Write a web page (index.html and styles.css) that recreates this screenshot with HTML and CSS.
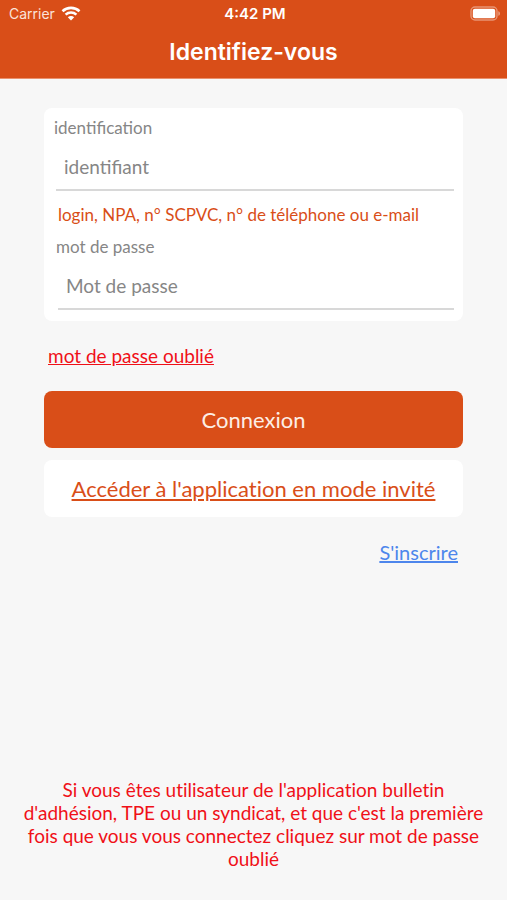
FILE: index.html
```html
<!DOCTYPE html>
<html lang="fr">
<head>
    <meta charset="UTF-8">
    <meta name="viewport" content="width=device-width, initial-scale=1.0">
    <title>Identifiez-vous</title>
    <link rel="stylesheet" href="styles.css">
</head>
<body>
    <header class="header">
        <div class="status-bar">
            <div class="carrier">
                <span>Carrier</span>
                <svg class="wifi" width="20" height="15" viewBox="0 0 20 15" fill="none" stroke="#fff" stroke-width="2.6">
                    <path d="M1.5 5.2C6.2 0.8 13.8 0.8 18.5 5.2"/>
                    <path d="M4.6 8.6C7.7 5.8 12.3 5.8 15.4 8.6"/>
                    <path d="M10 14.4L6.8 11.2C8.6 9.6 11.4 9.6 13.2 11.2Z" fill="#fff" stroke="none"/>
                </svg>
            </div>
            <div class="time">4:42 PM</div>
            <div class="battery">
                <svg width="31" height="15" viewBox="0 0 31 15">
                    <rect x="1" y="1" width="26" height="13" rx="4" fill="none" stroke="#fff" stroke-opacity="0.4" stroke-width="1.4"/>
                    <rect x="2.8" y="2.8" width="22.4" height="9.4" rx="2" fill="#fff"/>
                    <path d="M28.4 5.2C30.4 5.8 30.4 9.2 28.4 9.8Z" fill="#fff" fill-opacity="0.5"/>
                </svg>
            </div>
        </div>
        <h1>Identifiez-vous</h1>
    </header>

    <main class="container">
        <form id="login-form">
            <div class="card">
                <label for="identifiant">identification</label>
                <input type="text" id="identifiant" placeholder="identifiant">
                <p class="hint">login, NPA, n° SCPVC, n° de téléphone ou e-mail</p>
                <div class="password">
                    <label for="mot_de_passe">mot de passe</label>
                    <input type="password" id="mot_de_passe" placeholder="Mot de passe">
                </div>
            </div>
            <a class="forgot" href="#">mot de passe oublié</a>
            <button type="submit" class="btn">Connexion</button>
            <a class="guest" href="#">Accéder à l'application en mode invité</a>
            <a class="register" href="#">S'inscrire</a>
        </form>
    </main>

    <footer class="notice">
        <p>Si vous êtes utilisateur de l'application bulletin d'adhésion, TPE ou un syndicat, et que c'est la première fois que vous vous connectez cliquez sur mot de passe oublié</p>
    </footer>
</body>
</html>
```
FILE: styles.css
```css
* {
    box-sizing: border-box;
}

body {
    font-family: Lato, sans-serif;
    background-color: #f7f7f7;
    margin: 0;
    min-height: 100vh;
    display: flex;
    flex-direction: column;
}

.header {
    background-color: #d94e18;
    color: #fff;
    font-family: Inter, sans-serif;
    border-bottom: 1px solid #e9916e;
}

.status-bar {
    display: grid;
    grid-template-columns: 1fr auto 1fr;
    align-items: center;
    height: 27px;
    padding: 0 6px 0 9px;
    font-size: 14px;
}

.carrier {
    display: flex;
    align-items: center;
    gap: 6px;
    color: #fbe3da;
}

.time {
    font-size: 15px;
    font-weight: 600;
}

.battery {
    display: flex;
    justify-content: flex-end;
}

h1 {
    margin: 0;
    font-size: 23px;
    font-weight: 600;
    line-height: 51px;
    text-align: center;
}

.container {
    flex: 1;
    padding: 29px 44px;
}

form {
    display: flex;
    flex-direction: column;
}

.card {
    background-color: #fff;
    border-radius: 8px;
    padding: 8px 9px 11px;
}

label {
    display: block;
    padding-left: 1px;
    font-size: 17px;
    line-height: 24px;
    color: #868686;
}

input {
    display: block;
    width: calc(100% - 3px);
    height: 51px;
    margin-left: 3px;
    padding: 4px 8px 0;
    border: none;
    border-bottom: 2px solid #d8d8d8;
    background: none;
    font-family: inherit;
    font-size: 19px;
    color: #444;
}

input::placeholder {
    color: #868686;
    opacity: 1;
}

.hint {
    margin: 12px 0 8px 5px;
    font-size: 17px;
    line-height: 24px;
    color: #d94e18;
}

.password {
    padding-left: 2px;
}

.forgot {
    align-self: flex-start;
    margin: 23px 4px;
    font-size: 19px;
    line-height: 24px;
    color: #f01018;
}

.btn {
    height: 57px;
    border: none;
    border-radius: 8px;
    background-color: #d94e18;
    color: #fdeee6;
    font-family: inherit;
    font-size: 22px;
    cursor: pointer;
}

.guest {
    margin-top: 12px;
    border-radius: 8px;
    background-color: #fff;
    font-size: 22px;
    font-variant-ligatures: none;
    line-height: 57px;
    text-align: center;
    color: #d94e18;
}

.register {
    align-self: flex-end;
    margin: 23px 5px;
    font-size: 20px;
    line-height: 24px;
    color: #4d86ec;
}

.notice {
    padding: 0 18px 30px;
    font-size: 19px;
    font-variant-ligatures: none;
    line-height: 23px;
    text-align: center;
    color: #f01018;
}

.notice p {
    margin: 0;
}
```
